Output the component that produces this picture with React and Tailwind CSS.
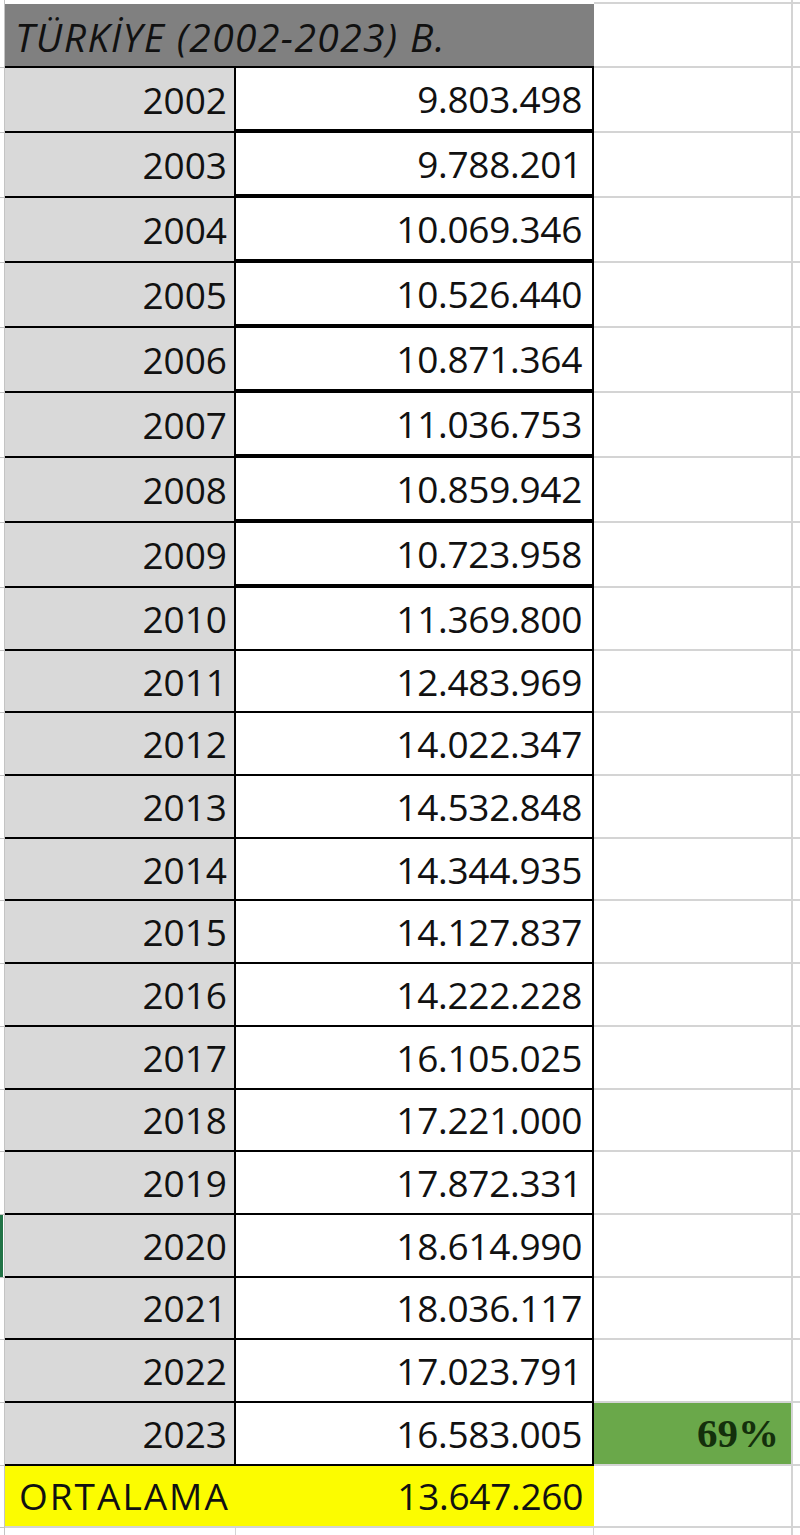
import React from "react";

const rows = [
  ["2002", "9.803.498"],
  ["2003", "9.788.201"],
  ["2004", "10.069.346"],
  ["2005", "10.526.440"],
  ["2006", "10.871.364"],
  ["2007", "11.036.753"],
  ["2008", "10.859.942"],
  ["2009", "10.723.958"],
  ["2010", "11.369.800"],
  ["2011", "12.483.969"],
  ["2012", "14.022.347"],
  ["2013", "14.532.848"],
  ["2014", "14.344.935"],
  ["2015", "14.127.837"],
  ["2016", "14.222.228"],
  ["2017", "16.105.025"],
  ["2018", "17.221.000"],
  ["2019", "17.872.331"],
  ["2020", "18.614.990"],
  ["2021", "18.036.117"],
  ["2022", "17.023.791"],
  ["2023", "16.583.005"],
];

const font = { fontFamily: '"Open Sans", "Noto Sans", sans-serif' };

function Row({ year, value, idx }) {
  const thick = idx < 8;
  const selected = year === "2020";
  const last = year === "2023";
  return (
    <div className={`flex w-[800px] ${thick ? "h-[65px]" : "h-[62.7px]"}`}>
      <div className="relative w-[5px] shrink-0 border-r border-b border-[#c4c4c4]">
        {selected && <div className="absolute left-0 top-0 h-full w-[3px] bg-[#217346]" />}
      </div>
      <div className="flex w-[231px] shrink-0 items-center justify-end border-r-2 border-b-2 border-black bg-[#d9d9d9] pr-[7px] text-[37px] leading-none text-[#111]">
        {year}
      </div>
      <div
        className={`flex w-[358px] shrink-0 items-center justify-end border-r-2 border-black bg-white pr-[10px] text-[37px] leading-none tracking-[-0.3px] text-[#111] ${
          thick ? "border-b-4" : "border-b-2"
        }`}
      >
        {value}
      </div>
      <div
        className={`flex w-[199px] shrink-0 items-center justify-end border-r-2 border-b-2 border-[#d4d4d4] pr-[12px] ${
          last ? "bg-[#6aa84a]" : "bg-white"
        }`}
      >
        {last && (
          <span
            className="text-[41px] font-bold leading-none text-[#14300c]"
            style={{ fontFamily: '"Liberation Serif", "DejaVu Serif", serif' }}
          >
            69%
          </span>
        )}
      </div>
      <div className="flex-1 border-b-2 border-[#d4d4d4]" />
    </div>
  );
}

export default function App() {
  return (
    <div className="h-[1535px] w-[800px] overflow-hidden bg-white" style={font}>
      {/* top strip */}
      <div className="flex h-[4px] w-[800px]">
        <div className="w-[5px] shrink-0 border-r border-[#c4c4c4]" />
        <div className="w-[589px] shrink-0" />
        <div className="w-[199px] shrink-0 border-r-2 border-b-2 border-[#d4d4d4]" />
        <div className="flex-1 border-b-2 border-[#d4d4d4]" />
      </div>
      {/* header */}
      <div className="flex h-[64px] w-[800px]">
        <div className="w-[5px] shrink-0 border-r border-b border-[#c4c4c4]" />
        <div className="flex w-[589px] shrink-0 items-center border-b-2 border-black bg-[#808080] pl-[10px] pt-[2px] text-[39px] font-medium italic leading-none tracking-[1.4px] text-[#111]">
          TÜRKİYE (2002-2023) B.
        </div>
        <div className="w-[199px] shrink-0 border-r-2 border-b-2 border-[#d4d4d4]" />
        <div className="flex-1 border-b-2 border-[#d4d4d4]" />
      </div>
      {rows.map(([y, v], i) => (
        <Row key={y} year={y} value={v} idx={i} />
      ))}
      {/* ORTALAMA */}
      <div className="flex h-[62px] w-[800px]">
        <div className="w-[5px] shrink-0 border-r border-b border-[#c4c4c4]" />
        <div className="flex w-[589px] shrink-0 items-center justify-between border-b-2 border-[#d4d4d4] bg-[#fcfc00] pl-[14px] pr-[11px] text-[37px] leading-none text-[#111]">
          <span className="tracking-[2px]">ORTALAMA</span>
          <span className="tracking-[-0.3px]">13.647.260</span>
        </div>
        <div className="w-[199px] shrink-0 border-r-2 border-b-2 border-[#d4d4d4]" />
        <div className="flex-1 border-b-2 border-[#d4d4d4]" />
      </div>
      <div className="flex h-[20px] w-[800px]">
        <div className="w-[5px] shrink-0 border-r border-[#c4c4c4]" />
        <div className="w-[231px] shrink-0 border-r border-[#d4d4d4]" />
        <div className="w-[358px] shrink-0 border-r border-[#d4d4d4]" />
        <div className="w-[199px] shrink-0 border-r-2 border-[#d4d4d4]" />
      </div>
    </div>
  );
}
